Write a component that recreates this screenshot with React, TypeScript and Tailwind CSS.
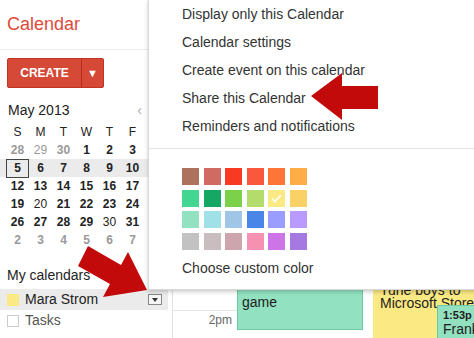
import React from 'react';

const swatchRows: string[][] = [
  ['bg-[#ac725e]', 'bg-[#d06b64]', 'bg-[#f83a22]', 'bg-[#fa573c]', 'bg-[#ff7537]', 'bg-[#ffad46]'],
  ['bg-[#42d692]', 'bg-[#16a765]', 'bg-[#7bd148]', 'bg-[#b3dc6c]', 'bg-[#fbe983]', 'bg-[#fad165]'],
  ['bg-[#92e1c0]', 'bg-[#9fe1e7]', 'bg-[#9fc6e7]', 'bg-[#4986e7]', 'bg-[#9a9cff]', 'bg-[#b99aff]'],
  ['bg-[#c2c2c2]', 'bg-[#cabdbf]', 'bg-[#cca6ac]', 'bg-[#f691b2]', 'bg-[#cd74e6]', 'bg-[#a47ae2]'],
];

const menuItems = [
  'Display only this Calendar',
  'Calendar settings',
  'Create event on this calendar',
  'Share this Calendar',
  'Reminders and notifications',
];

type Day = { n: number; muted?: boolean; light?: boolean; today?: boolean };

const weeks: Day[][] = [
  [{ n: 28, muted: true }, { n: 29, muted: true, light: true }, { n: 30, muted: true }, { n: 1 }, { n: 2 }, { n: 3 }, { n: 4 }],
  [{ n: 5, today: true }, { n: 6 }, { n: 7 }, { n: 8 }, { n: 9 }, { n: 10 }, { n: 11 }],
  [{ n: 12 }, { n: 13 }, { n: 14 }, { n: 15 }, { n: 16 }, { n: 17 }, { n: 18 }],
  [{ n: 19 }, { n: 20, light: true }, { n: 21 }, { n: 22 }, { n: 23 }, { n: 24 }, { n: 25 }],
  [{ n: 26 }, { n: 27 }, { n: 28 }, { n: 29 }, { n: 30, light: true }, { n: 31 }, { n: 1, muted: true }],
  [{ n: 2, muted: true }, { n: 3, muted: true }, { n: 4, muted: true }, { n: 5, muted: true }, { n: 6, muted: true }, { n: 7, muted: true }, { n: 8, muted: true }],
];

const MiniMonth: React.FC = () => (
  <div className="mt-[2px] flex flex-col text-[12px]">
    <div className="flex h-[18px] items-center pl-[6px] text-[#222]">
      {['S', 'M', 'T', 'W', 'T', 'F', 'S'].map((d, i) => (
        <div key={i} className="w-[23px] text-center">{d}</div>
      ))}
    </div>
    {weeks.map((week, wi) => (
      <div key={wi} className={`flex h-[18px] items-center pl-[6px] ${wi === 1 ? 'bg-[#ebebeb]' : ''}`}>
        {week.map((d, di) => (
          <div
            key={di}
            className={`flex h-[19px] w-[23px] items-center justify-center ${d.light ? 'font-normal' : 'font-bold'} ${
              d.muted ? 'text-[#999]' : 'text-[#222]'
            } ${d.today ? 'border border-[#444]' : ''}`}
          >
            {d.n}
          </div>
        ))}
      </div>
    ))}
  </div>
);

const Sidebar: React.FC = () => (
  <aside className="flex w-[172px] shrink-0 flex-col bg-white">
    <div className="flex h-[50px] items-center border-b border-[#ebebeb] pl-[7px]">
      <span className="text-[18px] text-[#dd4b39]">Calendar</span>
    </div>

    <div className="ml-[7px] mt-[8px] flex h-[30px] w-[97px] rounded-[2px] border border-[#c23321] bg-[#d64937] text-white">
      <div className="flex flex-1 items-center justify-center text-[12px] font-bold">CREATE</div>
      <div className="flex w-[22px] items-center justify-center border-l border-[#b52d1c] text-[11px]">▼</div>
    </div>

    <div className="mt-[11px] flex h-[22px] items-center pl-[8px] pr-[30px]">
      <span className="text-[14px] text-[#222]">May 2013</span>
      <span className="ml-auto text-[14px] text-[#aaa]">‹</span>
    </div>

    <MiniMonth />

    <div className="mt-[16px] flex h-[20px] items-center pl-[7px] text-[14px] text-[#222]">My calendars</div>

    <div className="mr-[4px] mt-[4px] flex h-[21px] items-center bg-[#ebebeb] pl-[7px]">
      <span className="h-[12px] w-[12px] bg-[#fbe983]" />
      <span className="ml-[6px] text-[14px] text-[#222]">Mara Strom</span>
      <span className="ml-auto mr-[6px] flex h-[11px] w-[14px] items-center justify-center border border-[#888] bg-[#f5f5f5]">
        <span className="h-0 w-0 border-l-[3px] border-r-[3px] border-t-[4px] border-l-transparent border-r-transparent border-t-[#333]" />
      </span>
    </div>

    <div className="flex h-[21px] items-center pl-[7px]">
      <span className="h-[12px] w-[12px] border border-[#ccc] bg-white" />
      <span className="ml-[6px] text-[14px] text-[#555]">Tasks</span>
    </div>
  </aside>
);

const DayGrid: React.FC = () => (
  <main className="flex flex-1 flex-col border-l border-[#e0e0e0]">
    <div className="h-[269px]" />
    <div className="flex flex-1">
      <div className="w-[64px] shrink-0">
        <div className="h-[42px] border-b border-[#e5e5e5]" />
        <div className="pr-[5px] pt-[2px] text-right text-[12px] leading-[14px] text-[#666]">2pm</div>
      </div>
      <div className="relative flex-1">
        <div className="absolute left-0 top-[16px] h-[45px] w-[126px] border border-[#6cc9a3] bg-[#92e1c0] pl-[4px] pt-[9px] text-[14px] leading-[14px] text-[#1d1d1d]">
          game
        </div>
        <div className="absolute bottom-0 left-[136px] right-0 top-[12px] overflow-hidden whitespace-nowrap bg-[#fbe983] pl-[7px] pt-[3px] text-[14px] leading-[13px] text-[#1d1d1d]">
          <div>Tune boys to</div>
          <div>Microsoft Store</div>
        </div>
        <div className="absolute bottom-0 left-[200px] right-0 top-[36px] overflow-hidden whitespace-nowrap border-l border-t border-[#6cc9a3] bg-[#92e1c0] pl-[5px] pt-[3px] text-[#1d1d1d]">
          <div className="text-[11px] font-bold leading-[13px]">1:53p</div>
          <div className="text-[14px] leading-[15px]">Frank</div>
          <div className="text-[14px] leading-[15px]">Lee</div>
        </div>
      </div>
    </div>
  </main>
);

const CalendarMenu: React.FC = () => (
  <div className="absolute left-[148px] top-[-1px] w-[340px] border border-[#d9d9d9] bg-white shadow-[0_2px_4px_rgba(0,0,0,0.2)]">
    <div className="pb-[8px]">
      {menuItems.map((item) => (
        <div key={item} className="flex h-[28px] items-center pl-[33px] text-[14px] text-[#333]">
          {item}
        </div>
      ))}
    </div>
    <div className="border-t border-[#e5e5e5] pl-[33px] pt-[19px]">
      <div className="grid grid-cols-[repeat(6,17px)] gap-[4.6px]">
        {swatchRows.flat().map((cls, i) => (
          <div key={i} className={`flex h-[17px] w-[17px] items-center justify-center ${cls}`}>
            {i === 10 && (
              <svg width="11" height="9" viewBox="0 0 11 9">
                <path d="M1 4.5 L4 7.5 L10 1" fill="none" stroke="white" strokeWidth="1.6" />
              </svg>
            )}
          </div>
        ))}
      </div>
      <div className="mt-[8px] pb-[11px] text-[14px] leading-[20px] text-[#333]">Choose custom color</div>
    </div>
  </div>
);

const Arrows: React.FC = () => (
  <svg className="pointer-events-none absolute inset-0" width="474" height="338" viewBox="0 0 474 338">
    <polygon points="311,96 342,73 342,86 378,86 378,109 342,109 342,120" fill="#c20a0a" />
    <polygon points="88,246 121,265 128,252 147,290 103,297 110,284 78,266" fill="#c20a0a" />
  </svg>
);

export default function App() {
  return (
    <div className="relative flex h-[338px] w-[474px] overflow-hidden bg-white font-['Liberation_Sans',Arial,sans-serif]">
      <Sidebar />
      <DayGrid />
      <CalendarMenu />
      <Arrows />
    </div>
  );
}
